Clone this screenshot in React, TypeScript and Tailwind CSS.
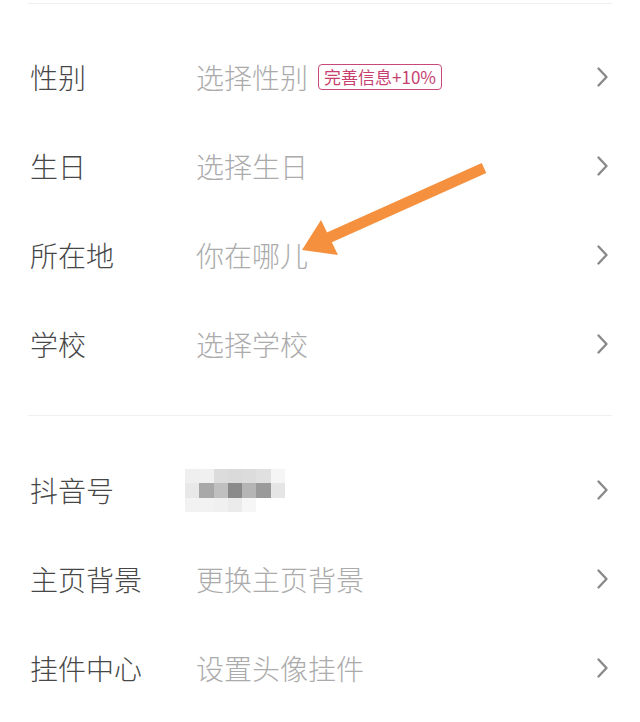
import React from 'react';

type Row = { label: string; value?: string; badge?: string; masked?: boolean };

const first: Row[] = [
    { label: '性别', value: '选择性别', badge: '完善信息+10%' },
    { label: '生日', value: '选择生日' },
    { label: '所在地', value: '你在哪儿' },
    { label: '学校', value: '选择学校' },
];

const second: Row[] = [
    { label: '抖音号', masked: true },
    { label: '主页背景', value: '更换主页背景' },
    { label: '挂件中心', value: '设置头像挂件' },
];

// mosaic used to hide the account id
const mosaic = [
    ['#efefef', '#f0f0f0', '#dcdcdc', '#dadada', '#dcdcdc', '#e0e0e0', '#f5f5f5'],
    ['#e8e8e8', '#a8a8a8', '#c0c0c0', '#8a8a8a', '#b5b5b5', '#9a9a9a', '#e5e5e5'],
    ['#f2f2f2', '#f2f2f2', '#f0f0f0', '#ebebeb', '#f6f6f6', '#ffffff', '#ffffff'],
];

function Chevron() {
    return (
        <svg width='13' height='22' viewBox='0 0 13 22' className='shrink-0'>
            <polyline points='2.5,2.5 10.5,11 2.5,19.5' fill='none' stroke='#8a8a8a' strokeWidth='2.4' strokeLinecap='round' strokeLinejoin='round' />
        </svg>
    );
}

function Mosaic() {
    return (
        <div className='grid grid-cols-[repeat(7,14.3px)] grid-rows-[repeat(3,14.5px)]'>
            {mosaic.flat().map((c, i) => (
                <div key={i} style={{ backgroundColor: c }} />
            ))}
        </div>
    );
}

function InfoRow({ row }: { row: Row }) {
    return (
        <div className='flex h-[89px] items-center'>
            <span className='w-[168px] shrink-0 pl-[2px] text-[28px] font-light text-[#474747]'>{row.label}</span>
            <div className='flex flex-1 items-center gap-[10px]'>
                {row.masked ? (
                    <div className='-ml-[11px] mt-[2px]'>
                        <Mosaic />
                    </div>
                ) : (
                    <span className='text-[28px] font-light text-[#ababab]'>{row.value}</span>
                )}
                {row.badge && (
                    <span className='mt-[1px] rounded-[4px] border-[1.5px] border-[#c9487a] px-[5px] text-[17px] leading-[24px] text-[#c63f6f]'>
                        {row.badge}
                    </span>
                )}
            </div>
            <div className='mr-[3px]'>
                <Chevron />
            </div>
        </div>
    );
}

export default function App() {
    return (
        <div className='relative h-[722px] w-[640px] overflow-hidden bg-white' style={{ fontFamily: '"Noto Sans CJK SC", "Noto Sans", sans-serif' }}>
            <div className='mx-[28px] mt-[3px] h-px bg-[#f0f0f0]' />
            <div className='mx-[28px] pb-[27px] pt-[28px]'>
                {first.map((r) => (
                    <InfoRow key={r.label} row={r} />
                ))}
            </div>
            <div className='mx-[28px] h-px bg-[#f0f0f0]' />
            <div className='mx-[28px] pt-[29px]'>
                {second.map((r) => (
                    <InfoRow key={r.label} row={r} />
                ))}
            </div>

            {/* annotation arrow drawn over the screenshot */}
            <svg className='pointer-events-none absolute left-0 top-0' width='640' height='722' viewBox='0 0 640 722'>
                <line x1='484' y1='168' x2='328' y2='238' stroke='#f5913e' strokeWidth='11' strokeLinecap='butt' />
                <polygon points='302,250 321,220 338,255' fill='#f5913e' />
            </svg>
        </div>
    );
}
